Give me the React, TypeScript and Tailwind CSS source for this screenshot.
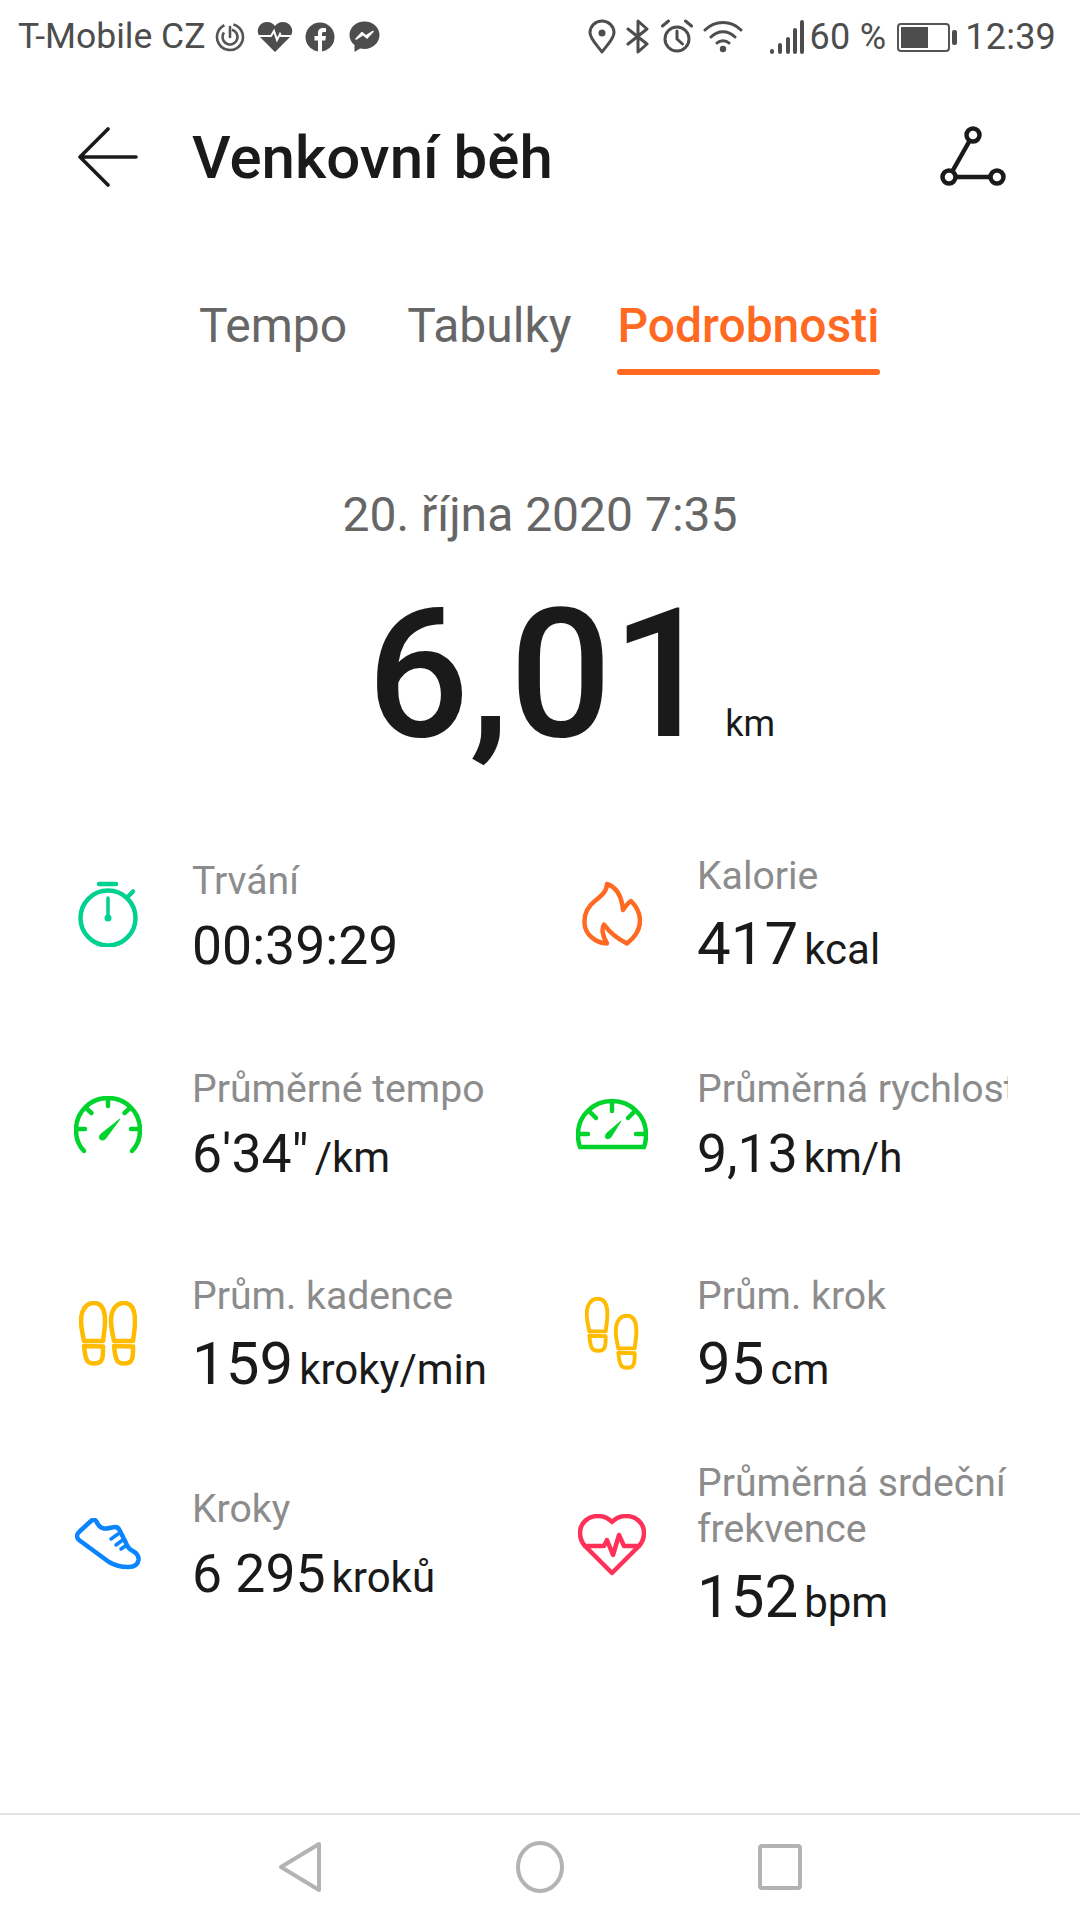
import React from "react";

const font = { fontFamily: "Roboto, 'Noto Sans', sans-serif" };

function Svg({ w, h, children, className }: { w: number; h: number; children: React.ReactNode; className?: string }) {
  return (
    <svg width={w} height={h} viewBox={`0 0 ${w} ${h}`} fill="none" className={className}>
      {children}
    </svg>
  );
}

function StatusLeft() {
  return (
    <div className="flex items-center">
      <span className="text-[35.5px] leading-none text-[#4d4d4d]">T-Mobile CZ</span>
      <Svg w={30} h={30} className="ml-[10px]">
        <circle cx="15" cy="15" r="13" stroke="#555" strokeWidth="2.6" strokeDasharray="72 10" transform="rotate(-75 15 15)" />
        <circle cx="15" cy="15" r="7.5" stroke="#555" strokeWidth="2.6" strokeDasharray="38 9" transform="rotate(-75 15 15)" />
        <path d="M15 5v10" stroke="#555" strokeWidth="2.6" strokeLinecap="round" />
      </Svg>
      <Svg w={36} h={32} className="ml-[12px]">
        <path d="M18 31 L3 16 C-2 10 2 1 10 1 C14 1 16.500 3 18 5 C19.500 3 22 1 26 1 C34 1 38 10 33 16 Z" fill="#4d4d4d" />
        <path d="M2 15h12l3-5 3 9 3-6 1 2h12" stroke="#fff" strokeWidth="2" fill="none" />
      </Svg>
      <Svg w={30} h={30} className="ml-[12px]">
        <circle cx="15" cy="15" r="14.500" fill="#4d4d4d" />
        <path d="M13 30V18.500H9.500V14H13V11C13 7.500 15 6 18 6C19.500 6 20.500 6.200 21 6.300V10H18.800C17.300 10 17 10.800 17 11.800V14H21L20.300 18.500H17V30Z" fill="#fff" />
      </Svg>
      <Svg w={31} h={32} className="ml-[14px]">
        <path d="M15.500 0.500C7 0.500 0.500 6.500 0.500 14C0.500 18 2.300 21.500 5.500 24V31L11 27.500C12.500 27.800 14 28 15.500 28C24 28 30.500 21.500 30.500 14C30.500 6.500 24 0.500 15.500 0.500Z" fill="#4d4d4d" />
        <path d="M7 18L13 11.500L17 15L24 10.500L18 17L14 13.500Z" fill="#fff" stroke="#fff" strokeWidth="1.500" strokeLinejoin="round" />
      </Svg>
    </div>
  );
}

function StatusRight() {
  const s = { stroke: "#4d4d4d", strokeWidth: 3, strokeLinecap: "round" as const, strokeLinejoin: "round" as const };
  return (
    <div className="flex items-center">
      <Svg w={28} h={36}>
        <path d="M14 33C9 26 2 20 2 13.500C2 7 7.500 2 14 2C20.500 2 26 7 26 13.500C26 20 19 26 14 33Z" {...s} />
        <circle cx="14" cy="14" r="3.500" fill="#4d4d4d" />
      </Svg>
      <Svg w={24} h={36} className="ml-[10px]">
        <path d="M2 10L21 25L12 33V2L21 10L2 25" {...s} />
      </Svg>
      <Svg w={34} h={36} className="ml-[10px]">
        <circle cx="17" cy="20" r="12" {...s} />
        <path d="M17 12V20L22.500 25" {...s} />
        <path d="M2.500 7L8.500 2M31.500 7L25.500 2" {...s} />
      </Svg>
      <Svg w={40} h={34} className="ml-[9px]">
        <path d="M2 10C12 0 28 0 38 10M8 17C15 10 25 10 32 17M14 23C17 20 23 20 26 23" {...s} />
        <circle cx="20" cy="29" r="3.200" fill="#4d4d4d" />
      </Svg>
      <Svg w={36} h={36} className="ml-[26px]">
        <g stroke="#4d4d4d" strokeWidth="4" strokeLinecap="round">
          <path d="M3 32V33" />
          <path d="M11 26V33" />
          <path d="M19 20V33" />
          <path d="M26 11V33" />
          <path d="M33 3V33" />
        </g>
      </Svg>
      <span className="text-[36px] leading-none text-[#4d4d4d] ml-[4px] whitespace-pre tracking-[0.3px]">60 %</span>
      <div className="ml-[11px] w-[53px] h-[29px] border-2 border-[#555] rounded-[4px] p-[2px]">
        <div className="w-[27px] h-full bg-[#4d4d4d]" />
      </div>
      <div className="ml-[2px] w-[5px] h-[15px] bg-[#4d4d4d] rounded-[2px]" />
      <span className="text-[36px] leading-none text-[#4d4d4d] ml-[8px] tracking-[0.2px]">12:39</span>
    </div>
  );
}

const Timer = () => (
  <Svg w={60} h={66} className="-mt-[2px]">
    <circle cx="30" cy="37" r="27.500" stroke="#00D191" strokeWidth="4.500" />
    <path d="M21 3H38M49.500 16L55 10.500" stroke="#00D191" strokeWidth="4.500" strokeLinecap="round" />
    <path d="M30 17V37" stroke="#00D191" strokeWidth="3.500" strokeLinecap="round" />
    <circle cx="30" cy="37" r="3.500" fill="#00D191" />
  </Svg>
);

const Flame = () => (
  <Svg w={60} h={66} className="-mt-[2px]">
    <path
      d="M25 3C25 10 20 14 14 19C6 25 2 32 2.500 42C3 54 14 62 25 62.500C21 56 19 48 22 43.500C28 52 36 58 45 62.500C52 57 58 50 58 40C58 32 54 25 49 20C46 22 43 26 41 29C40 18 37 7 25 3Z"
      stroke="#FF6922"
      strokeWidth="4.500"
      strokeLinejoin="round"
    />
  </Svg>
);

const Gauge1 = () => (
  <Svg w={68} h={58}>
    <path d="M10 55C4 49 2 42 2 34C2 16 16 2 34 2C52 2 66 16 66 34C66 42 64 49 58 55" stroke="#00D32C" strokeWidth="4.500" strokeLinecap="round" />
    <path d="M34 3V10M12 12L17.500 17M56 12L50.500 17M3 33H11M65 33H57" stroke="#00D32C" strokeWidth="4.500" strokeLinecap="round" />
    <path d="M46 23L32 42C30.500 44.500 27 44.500 26 43C25 41.500 25 40 27 38Z" fill="#00D32C" stroke="#00D32C" strokeWidth="1" strokeLinejoin="round" />
  </Svg>
);

const Gauge2 = () => (
  <Svg w={72} h={52} className="-mt-[2px]">
    <path d="M4 49C2 44 2 40 2 36C2 18 17 3 36 3C55 3 70 18 70 36C70 40 70 44 68 49Z" stroke="#00D32C" strokeWidth="4.500" />
    <path d="M36 4V13M14 14L20 20M58 14L52 20M3 36H12M69 36H60" stroke="#00D32C" strokeWidth="4.500" strokeLinecap="round" />
    <path d="M45 23L35 39C33 41.500 30 41 29.500 39.500C29 38 29.500 37 31 35Z" fill="#00D32C" stroke="#00D32C" strokeWidth="1" strokeLinejoin="round" />
  </Svg>
);

const Sole = ({ c = "#FFBB00" }: { c?: string }) => (
  <>
    <path d="M5 40C3 30 2 26 2 20C2 9 7 2 15 2C23 2 26 10 26 20C26 27 25 32 24 40Z" stroke={c} strokeWidth="4.500" strokeLinejoin="round" />
    <path d="M5 45L24 45.500C24 52 24.500 57 22 60C20 63 11 63.500 8.500 60C6 57 6 52 5 45Z" stroke={c} strokeWidth="4.500" strokeLinejoin="round" />
  </>
);

const Steps1 = () => (
  <Svg w={58} h={66} className="-mt-[2px]">
    <Sole />
    <g transform="translate(30 0)">
      <Sole />
    </g>
  </Svg>
);

const Steps2 = () => (
  <Svg w={54} h={74} className="-mt-[2px]">
    <g transform="scale(0.86)">
      <Sole />
    </g>
    <g transform="translate(29 17) scale(0.86)">
      <Sole />
    </g>
  </Svg>
);

const Shoe = () => (
  <Svg w={66} h={54}>
    <path
      d="M2 18C2 16 3 15 4 14L16 3C18 1 20 1.500 21.500 3.500C23 7 25 10 29 10.500C33 11 37 9 40 9C43 9 44 10.500 45 13L51 25C52 28 54 31 57 32.500C61 34.500 64 37 63.500 42C63 46 60 49 53 49C45 49 39 47 34 44L4 22C3 21 2 20 2 18Z"
      stroke="#0A84FF"
      strokeWidth="4.500"
      strokeLinejoin="round"
    />
    <path d="M36 21L43 16M41 27L47 22.500M46 31L51 27.500" stroke="#0A84FF" strokeWidth="3.500" strokeLinecap="round" />
  </Svg>
);

const Heart = () => (
  <Svg w={68} h={62}>
    <path d="M34 59L8 33C3 28 2 24 2 19C2 9 10 2 20 2C26 2 30 4 34 8C38 4 42 2 48 2C58 2 66 9 66 19C66 24 65 28 60 33Z" stroke="#FF3159" strokeWidth="4.500" strokeLinejoin="round" />
    <path d="M7 32H26L29 26L35 41L41 21L46 32H61" stroke="#FF3159" strokeWidth="4.500" strokeLinejoin="round" strokeLinecap="round" />
  </Svg>
);

function Row({ icon, label, value, unit, big, right }: any) {
  return (
    <div className="flex items-center min-w-0 h-[210px]">
      <div className={right ? "w-[72px] shrink-0 flex justify-center mr-[49px]" : "w-[72px] shrink-0 flex justify-center mr-[48px]"}>
        {icon}
      </div>
      <div className="min-w-0 flex-1 overflow-hidden pt-[5px]">
        <div className="text-[39.2px] leading-[46px] text-[#8c8c8c] whitespace-nowrap">{label}</div>
        <div className={big ? "flex items-baseline mt-[13px] whitespace-nowrap" : "flex items-baseline mt-[10px] whitespace-nowrap"}>
          <span className={big ? "text-[60px] leading-[64px] text-[#1a1a1a]" : "text-[53.5px] leading-[64px] text-[#1a1a1a]"}>{value}</span>
          {unit ? <span className="text-[42px] leading-[64px] ml-[6px] text-[#1a1a1a]">{unit}</span> : null}
        </div>
      </div>
    </div>
  );
}

export default function App() {
  return (
    <div className="w-[1080px] h-[1920px] bg-white flex flex-col overflow-hidden text-[#1a1a1a]" style={font}>
      <div className="h-[74px] flex items-center justify-between pl-[18px] pr-[24px] shrink-0">
        <StatusLeft />
        <StatusRight />
      </div>

      <div className="h-[168px] pl-[78px] pr-[74px] flex items-center shrink-0 -mt-[1px]">
        <Svg w={60} h={60}>
          <path d="M58 30H2M30 2L2 30L30 58" stroke="#1a1a1a" strokeWidth="3.600" strokeLinecap="round" strokeLinejoin="round" />
        </Svg>
        <h1 className="ml-[54px] flex-1 text-[60px] leading-none font-medium text-[#1a1a1a] pt-[1px]">Venkovní běh</h1>
        <Svg w={66} h={62} className="-mt-[2px]">
          <circle cx="33" cy="10" r="6.500" stroke="#1a1a1a" strokeWidth="4.500" />
          <circle cx="9" cy="52" r="6.500" stroke="#1a1a1a" strokeWidth="4.500" />
          <circle cx="57" cy="52" r="6.500" stroke="#1a1a1a" strokeWidth="4.500" />
          <path d="M29.500 16L12.500 46M15.500 52H50.500" stroke="#1a1a1a" strokeWidth="4.500" />
        </Svg>
      </div>

      <div className="flex pl-[199px] text-[48px] leading-[48px] h-[92px] shrink-0 mt-[59px]">
        <span className="text-[#666666] mr-[60px] pt-[2px]">Tempo</span>
        <span className="text-[#666666] mr-[46px] pt-[2px]">Tabulky</span>
        <span className="flex flex-col items-stretch">
          <span className="text-[#FF6922] font-medium text-[48px] pt-[2px]">Podrobnosti</span>
          <span className="h-[6px] bg-[#FF6922] rounded-full mt-[19px]" />
        </span>
      </div>

      <div className="text-center text-[48px] leading-[60px] text-[#666666] mt-[93px] shrink-0">20. října 2020 7:35</div>

      <div className="flex items-baseline pl-[367px] h-[170px] mt-[45px] shrink-0">
        <span className="text-[180px] leading-[170px] font-medium text-[#1a1a1a]">6,01</span>
        <span className="text-[36px] leading-none ml-[11px] text-[#1a1a1a]">km</span>
      </div>

      <div className="grid grid-cols-[504px_1fr] px-[72px] mt-[50px] shrink-0">
        <Row icon={<Timer />} label="Trvání" value="00:39:29" />
        <Row icon={<Flame />} label="Kalorie" value="417" unit="kcal" big right />
        <Row icon={<Gauge1 />} label="Průměrné tempo" value={`6'34"`} unit="/km" />
        <Row icon={<Gauge2 />} label="Průměrná rychlost" value="9,13" unit="km/h" right />
        <Row icon={<Steps1 />} label="Prům. kadence" value="159" unit="kroky/min" big />
        <Row icon={<Steps2 />} label="Prům. krok" value="95" unit="cm" big right />
        <Row icon={<Shoe />} label="Kroky" value="6 295" unit="kroků" />
        <Row icon={<Heart />} label={<>Průměrná srdeční<br />frekvence</>} value="152" unit="bpm" big right />
      </div>

      <div className="flex-1" />

      <div className="h-[107px] border-t-2 border-[#e5e5e5] shrink-0 flex items-center pb-[2px]">
        <div className="w-[360px] flex justify-end pr-[38px]">
          <Svg w={44} h={52}>
            <path d="M41 3L3 26L41 49Z" stroke="#b3b3b3" strokeWidth="4" strokeLinejoin="round" />
          </Svg>
        </div>
        <div className="flex-1 flex justify-center">
          <Svg w={48} h={52}>
            <ellipse cx="24" cy="26" rx="22" ry="24" stroke="#b3b3b3" strokeWidth="4" />
          </Svg>
        </div>
        <div className="w-[360px] flex pl-[38px]">
          <Svg w={44} h={46}>
            <rect x="2" y="2" width="40" height="42" rx="2" stroke="#b3b3b3" strokeWidth="4" />
          </Svg>
        </div>
      </div>
    </div>
  );
}
